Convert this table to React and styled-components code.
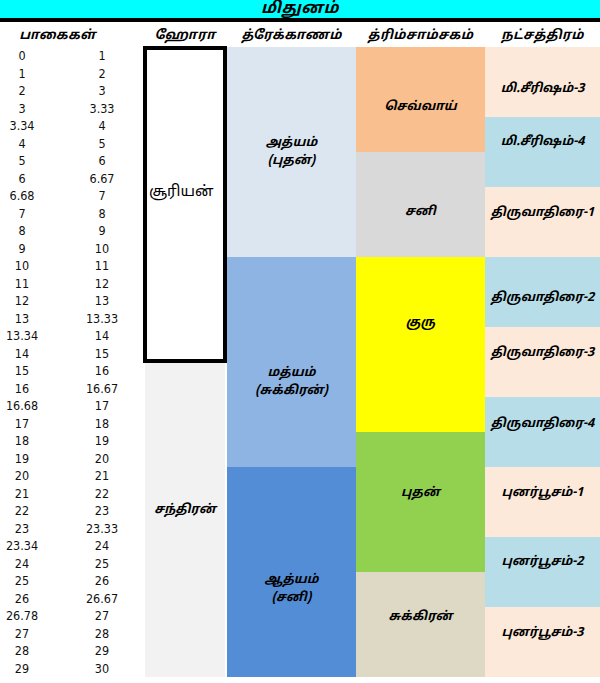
import React from 'react';
import styled, { createGlobalStyle } from 'styled-components';

const GlobalStyle = createGlobalStyle`
  body {
    margin: 0;
    background: #ffffff;
    font-family: "Noto Sans Tamil", "Noto Sans", "DejaVu Sans", sans-serif;
  }
`;

const UNIT = 7; // one third of a degree

const Page = styled.div`
  width: 600px;
  height: 683px;
  overflow: hidden;
  background: #ffffff;
`;

const TitleBar = styled.div`
  height: 18px;
  background: #00ffff;
  border-bottom: 4px solid #000;
  display: flex;
  align-items: center;
  justify-content: center;
  padding-top: 2px;
  box-sizing: content-box;
  margin-top: -2px;
  font-weight: bold;
  font-style: italic;
  font-size: 16px;
  letter-spacing: 0.5px;
  color: #000;
`;

const HeaderRow = styled.div`
  display: flex;
  height: 25px;
  align-items: flex-end;
`;

const HeaderCell = styled.div`
  width: ${(p) => p.$w}px;
  padding-right: ${(p) => p.$pr || 0}px;
  box-sizing: border-box;
  text-align: center;
  font-weight: bold;
  font-style: italic;
  font-size: 13px;
  letter-spacing: 0.3px;
  line-height: 22px;
  color: #000;
`;

const Body = styled.div`
  display: flex;
  height: ${90 * UNIT}px;
`;

const NumbersCol = styled.div`
  width: 143px;
  display: grid;
  grid-template-columns: 44px 99px;
  grid-template-rows: repeat(36, 1fr);
  font-family: "DejaVu Sans Condensed", "DejaVu Sans", sans-serif;
  font-stretch: condensed;
  font-size: 12.5px;
  color: #111;
`;

const Num = styled.div`
  display: flex;
  align-items: center;
  justify-content: center;
  padding-left: ${(p) => (p.$right ? 17 : 0)}px;
`;

const Column = styled.div`
  width: ${(p) => p.$w}px;
  display: flex;
  flex-direction: column;
`;

const Segment = styled.div`
  height: ${(p) => p.$units * UNIT}px;
  background: ${(p) => p.$bg};
  box-sizing: border-box;
  display: flex;
  align-items: center;
  justify-content: center;
  text-align: center;
  font-weight: bold;
  font-style: italic;
  font-size: 12.5px;
  line-height: 18px;
  color: #000;
  ${(p) =>
    p.$shift > 0
      ? `padding-top: ${p.$shift * 2}px;`
      : `padding-bottom: ${-(p.$shift || 0) * 2}px;`}
`;

const SunBox = styled.div`
  height: ${45 * UNIT + 2}px;
  margin-top: -1px;
  border: 4px solid #000;
  box-sizing: border-box;
  display: flex;
  align-items: center;
  padding: 0 0 24px 2px;
  font-size: 15px;
  color: #000;
`;

const MoonBox = styled(Segment)`
  margin: 0 2px;
  height: ${45 * UNIT - 1}px;
  padding-bottom: 20px;
`;

const rows = [
  ['0', '1'], ['1', '2'], ['2', '3'], ['3', '3.33'], ['3.34', '4'],
  ['4', '5'], ['5', '6'], ['6', '6.67'], ['6.68', '7'], ['7', '8'],
  ['8', '9'], ['9', '10'], ['10', '11'], ['11', '12'], ['12', '13'],
  ['13', '13.33'], ['13.34', '14'], ['14', '15'], ['15', '16'], ['16', '16.67'],
  ['16.68', '17'], ['17', '18'], ['18', '19'], ['19', '20'], ['20', '21'],
  ['21', '22'], ['22', '23'], ['23', '23.33'], ['23.34', '24'], ['24', '25'],
  ['25', '26'], ['26', '26.67'], ['26.78', '27'], ['27', '28'], ['28', '29'],
  ['29', '30'],
];

const drekkana = [
  { units: 30, bg: '#dce6f1', lines: ['அத்யம்', '(புதன்)'], shift: 0 },
  { units: 30, bg: '#8db4e2', lines: ['மத்யம்', '(சுக்கிரன்)'], shift: 20 },
  { units: 30, bg: '#538dd5', lines: ['ஆத்யம்', '(சனி)'], shift: 17 },
];

const trimsamsa = [
  { units: 15, bg: '#fabf8f', label: 'செவ்வாய்', shift: 7 },
  { units: 15, bg: '#d9d9d9', label: 'சனி', shift: 7 },
  { units: 25, bg: '#ffff00', label: 'குரு', shift: -22 },
  { units: 20, bg: '#92d050', label: 'புதன்', shift: -9 },
  { units: 15, bg: '#ddd9c4', label: 'சுக்கிரன்', shift: -8 },
];

const PEACH = '#fde9d9';
const SKY = '#b7dee8';

const nakshatra = [
  { bg: PEACH, label: 'மி.சீரிஷம்-3', shift: 7 },
  { bg: SKY, label: 'மி.சீரிஷம்-4', shift: -10 },
  { bg: PEACH, label: 'திருவாதிரை-1', shift: -9 },
  { bg: SKY, label: 'திருவாதிரை-2', shift: 6 },
  { bg: PEACH, label: 'திருவாதிரை-3', shift: -9 },
  { bg: SKY, label: 'திருவாதிரை-4', shift: -8 },
  { bg: PEACH, label: 'புனர்பூசம்-1', shift: -9 },
  { bg: SKY, label: 'புனர்பூசம்-2', shift: -10 },
  { bg: PEACH, label: 'புனர்பூசம்-3', shift: -9 },
];

export default function App() {
  return (
    <Page>
      <GlobalStyle />
      <TitleBar>மிதுனம்</TitleBar>
      <HeaderRow>
        <HeaderCell $w={143} $pr={28}>பாகைகள்</HeaderCell>
        <HeaderCell $w={84}>ஹோரா</HeaderCell>
        <HeaderCell $w={129}>த்ரேக்காணம்</HeaderCell>
        <HeaderCell $w={129}>த்ரிம்சாம்சகம்</HeaderCell>
        <HeaderCell $w={115}>நட்சத்திரம்</HeaderCell>
      </HeaderRow>
      <Body>
        <NumbersCol>
          {rows.map(([from, to], i) => (
            <React.Fragment key={i}>
              <Num>{from}</Num>
              <Num $right>{to}</Num>
            </React.Fragment>
          ))}
        </NumbersCol>
        <Column $w={84}>
          <SunBox>சூரியன்</SunBox>
          <MoonBox $bg="#f2f2f2">சந்திரன்</MoonBox>
        </Column>
        <Column $w={129}>
          {drekkana.map((d, i) => (
            <Segment key={i} $units={d.units} $bg={d.bg} $shift={d.shift}>
              <div>
                {d.lines[0]}
                <br />
                {d.lines[1]}
              </div>
            </Segment>
          ))}
        </Column>
        <Column $w={129}>
          {trimsamsa.map((t, i) => (
            <Segment key={i} $units={t.units} $bg={t.bg} $shift={t.shift}>
              {t.label}
            </Segment>
          ))}
        </Column>
        <Column $w={115}>
          {nakshatra.map((n, i) => (
            <Segment key={i} $units={10} $bg={n.bg} $shift={n.shift}>
              {n.label}
            </Segment>
          ))}
        </Column>
      </Body>
    </Page>
  );
}
